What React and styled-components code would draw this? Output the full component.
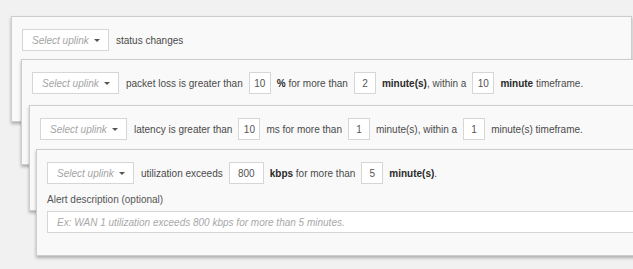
import React from 'react'
import styled, { createGlobalStyle } from 'styled-components'

const GlobalStyle = createGlobalStyle`
  html, body {
    margin: 0;
    padding: 0;
    overflow: hidden;
    background: #f1f1f1;
  }
  body {
    font-family: "Liberation Sans", Arial, Helvetica, sans-serif;
    font-size: 10px;
    color: #444;
  }
`

const Stack = styled.div`
  display: grid;
  width: 633px;
  height: 269px;
  overflow: hidden;
`

// cards are fanned out on top of each other, each one shifted down-right
const Card = styled.div`
  grid-area: 1 / 1;
  align-self: start;
  box-sizing: border-box;
  margin-left: ${props => props.$x}px;
  margin-top: ${props => props.$y}px;
  width: ${props => props.$width}px;
  min-height: 106px;
  padding: 12px 10px 22px 10px;
  background: #f9f9f9;
  border: 1px solid #cdcdcd;
  box-shadow: 0 2px 3px rgba(0, 0, 0, 0.28);
`

const Row = styled.div`
  display: flex;
  align-items: center;
  gap: 6px;
  height: 22px;
  white-space: nowrap;
`

const Select = styled.div`
  box-sizing: border-box;
  display: flex;
  align-items: center;
  justify-content: space-between;
  width: 87px;
  height: 22px;
  padding: 0 8px 0 9px;
  margin-right: 1px;
  background: #fff;
  border: 1px solid #d6d6d6;
  flex-shrink: 0;
`

const Placeholder = styled.span`
  font-style: italic;
  color: #a3a3a3;
`

const Caret = styled.span`
  width: 0;
  height: 0;
  border-left: 3px solid transparent;
  border-right: 3px solid transparent;
  border-top: 3px solid #555;
`

const NumberBox = styled.div`
  box-sizing: border-box;
  display: flex;
  align-items: center;
  justify-content: center;
  width: ${props => (props.$wide ? 35 : 22)}px;
  height: 22px;
  background: #fff;
  border: 1px solid #d6d6d6;
  color: #555;
  flex-shrink: 0;
`

const Text = styled.span`
  color: #4a4a4a;
`

const Strong = styled.b`
  color: #2a2a2a;
  font-weight: 700;
`

const Label = styled.div`
  margin-top: 10px;
  color: #555;
`

const Description = styled.div`
  box-sizing: border-box;
  display: flex;
  align-items: center;
  height: 22px;
  margin-top: 6px;
  padding: 0 9px;
  background: #fff;
  border: 1px solid #d6d6d6;
  font-style: italic;
  color: #a8a8a8;
  white-space: nowrap;
`

const UplinkSelect = () => (
  <Select>
    <Placeholder>Select uplink</Placeholder>
    <Caret />
  </Select>
)

export default function App () {
  return (
    <>
      <GlobalStyle />
      <Stack>
        <Card $x={11} $y={16} $width={621}>
          <Row>
            <UplinkSelect />
            <Text>status changes</Text>
          </Row>
        </Card>

        <Card $x={21} $y={59} $width={660}>
          <Row>
            <UplinkSelect />
            <Text>packet loss is greater than</Text>
            <NumberBox>10</NumberBox>
            <Text><Strong>%</Strong> for more than</Text>
            <NumberBox>2</NumberBox>
            <Text><Strong>minute(s)</Strong>, within a</Text>
            <NumberBox>10</NumberBox>
            <Text><Strong>minute</Strong> timeframe.</Text>
          </Row>
        </Card>

        <Card $x={29} $y={105} $width={660}>
          <Row>
            <UplinkSelect />
            <Text>latency is greater than</Text>
            <NumberBox>10</NumberBox>
            <Text>ms for more than</Text>
            <NumberBox>1</NumberBox>
            <Text>minute(s), within a</Text>
            <NumberBox>1</NumberBox>
            <Text>minute(s) timeframe.</Text>
          </Row>
        </Card>

        <Card $x={36} $y={149} $width={660}>
          <Row>
            <UplinkSelect />
            <Text>utilization exceeds</Text>
            <NumberBox $wide>800</NumberBox>
            <Text><Strong>kbps</Strong> for more than</Text>
            <NumberBox>5</NumberBox>
            <Text><Strong>minute(s)</Strong>.</Text>
          </Row>
          <Label>Alert description (optional)</Label>
          <Description>Ex: WAN 1 utilization exceeds 800 kbps for more than 5 minutes.</Description>
        </Card>
      </Stack>
    </>
  )
}
